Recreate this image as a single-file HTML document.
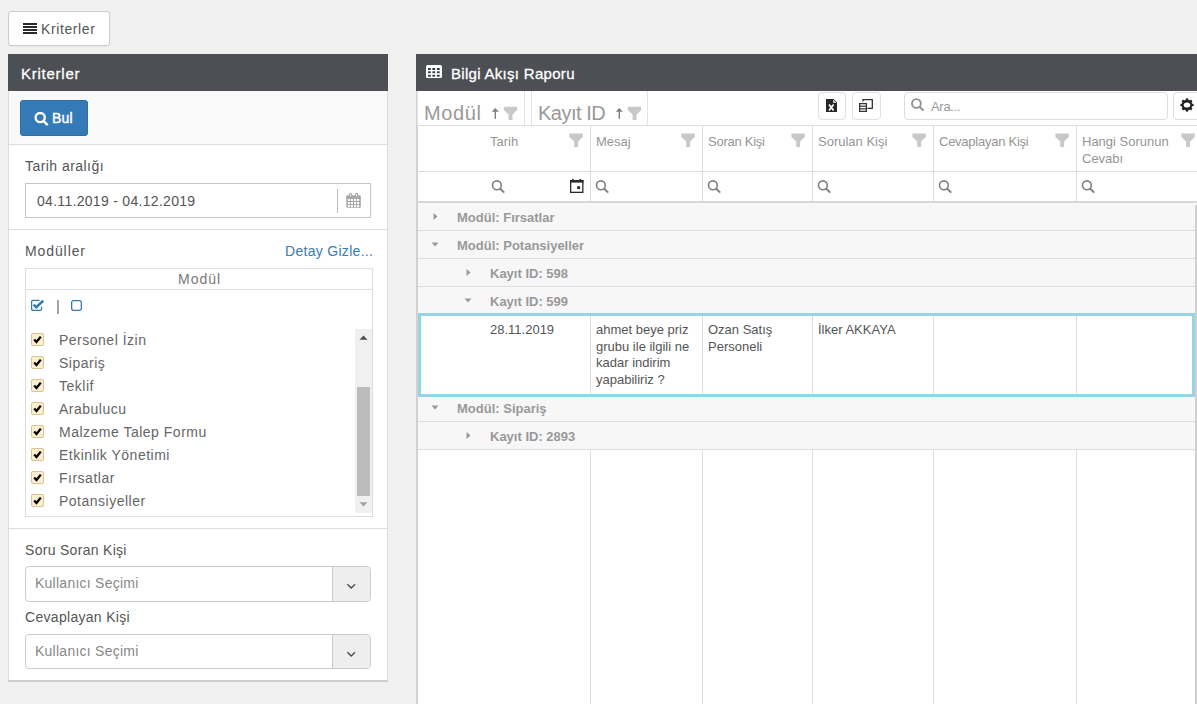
<!DOCTYPE html>
<html><head><meta charset="utf-8">
<style>
*{box-sizing:border-box;margin:0;padding:0}
html,body{width:1197px;height:704px;overflow:hidden}
body{background:#f0f0f0;font-family:"Liberation Sans",sans-serif;position:relative;color:#555}
.a{position:absolute}
.t{position:absolute;white-space:nowrap;line-height:1}
.lbl{font-size:14px;color:#555;letter-spacing:0.3px}
.cb{position:absolute;left:31px;width:13px;height:13px;background:#fcefd0;border:1px solid #d8c393;border-radius:2px}
.cbt{position:absolute;left:59px;font-size:14px;color:#666;white-space:nowrap;line-height:1;letter-spacing:0.5px}
.vl{position:absolute;width:1px;background:#dddddd}
.hl{position:absolute;height:1px;background:#dddddd}
.hd{position:absolute;font-size:13px;color:#959595;white-space:nowrap;line-height:1}
.gr{position:absolute;left:418px;width:779px;background:#f7f7f7;border-bottom:1px solid #dddddd}
.gt{position:absolute;font-size:13px;font-weight:bold;color:#999;white-space:nowrap;line-height:1}
.dt{position:absolute;font-size:13px;color:#555;white-space:nowrap;line-height:16.7px}
</style></head><body>

<!-- top button -->
<div class="a" style="left:8px;top:11px;width:102px;height:35px;background:#fff;border:1px solid #ccc;border-radius:3px;box-shadow:0 1px 0 rgba(0,0,0,.04)"></div>
<svg class="a" style="left:23px;top:23px" width="14" height="11" viewBox="0 0 14 11"><rect x="0" y="0" width="14" height="2" fill="#2a2a2a"/><rect x="0" y="3" width="14" height="2" fill="#2a2a2a"/><rect x="0" y="6" width="14" height="2" fill="#2a2a2a"/><rect x="0" y="9" width="14" height="2" fill="#2a2a2a"/></svg>
<div class="t" style="left:41px;top:22px;font-size:14px;color:#555;letter-spacing:0.6px">Kriterler</div>

<!-- ============ left panel ============ -->
<div class="a" style="left:8px;top:54px;width:380px;height:628px;background:#fff;border:1px solid #ddd;border-top:0;border-bottom:2px solid #ccc"></div>
<div class="a" style="left:8px;top:54px;width:380px;height:37px;background:#4c4f54"></div>
<div class="t" style="left:21px;top:66px;font-size:15px;color:#fff;letter-spacing:0.75px;-webkit-text-stroke:0.3px #fff">Kriterler</div>

<!-- toolbar -->
<div class="a" style="left:9px;top:91px;width:378px;height:54px;background:#f9f9f9;border-bottom:1px solid #dddddd"></div>
<div class="a" style="left:20px;top:100px;width:68px;height:36px;background:#337ab7;border:1px solid #2e6da4;border-radius:3px"></div>
<svg class="a" style="left:34px;top:112px" width="15" height="14" viewBox="0 0 15 14"><circle cx="6.2" cy="5.6" r="4.6" fill="none" stroke="#fff" stroke-width="2.3"/><line x1="9.4" y1="8.9" x2="13" y2="12.4" stroke="#fff" stroke-width="2.5" stroke-linecap="round"/></svg>
<div class="t" style="left:52px;top:111px;font-size:14px;color:#fff;-webkit-text-stroke:0.45px #fff;letter-spacing:0.2px">Bul</div>

<!-- tarih -->
<div class="t lbl" style="left:25px;top:159px;letter-spacing:0.45px">Tarih aralığı</div>
<div class="a" style="left:25px;top:183px;width:346px;height:35px;border:1px solid #c6c6c6;background:#fff"></div>
<div class="t" style="left:37px;top:194px;font-size:14px;color:#555;letter-spacing:0.3px">04.11.2019 - 04.12.2019</div>
<div class="a" style="left:337px;top:189px;width:1px;height:24px;background:#bbb"></div>
<svg class="a" style="left:346px;top:193px" width="15" height="15" viewBox="0 0 15 15"><rect x="0.3" y="2.2" width="14.5" height="12.6" rx="1.3" fill="#a6a6a6"/><rect x="3" y="0.1" width="2.9" height="4" rx="1" fill="#a6a6a6"/><rect x="9.1" y="0.1" width="2.9" height="4" rx="1" fill="#a6a6a6"/><g fill="#fff"><rect x="4" y="1.3" width="0.9" height="2.2"/><rect x="10.1" y="1.3" width="0.9" height="2.2"/><rect x="1.8" y="5.9" width="2.1" height="2.05"/><rect x="4.9" y="5.9" width="2.1" height="2.05"/><rect x="8.0" y="5.9" width="2.1" height="2.05"/><rect x="11.0" y="5.9" width="2.1" height="2.05"/><rect x="1.8" y="9.0" width="2.1" height="2.05"/><rect x="4.9" y="9.0" width="2.1" height="2.05"/><rect x="8.0" y="9.0" width="2.1" height="2.05"/><rect x="11.0" y="9.0" width="2.1" height="2.05"/><rect x="1.8" y="12.0" width="2.1" height="2.05"/><rect x="4.9" y="12.0" width="2.1" height="2.05"/><rect x="8.0" y="12.0" width="2.1" height="2.05"/><rect x="11.0" y="12.0" width="2.1" height="2.05"/></g></svg>
<div class="hl" style="left:9px;top:229px;width:378px"></div>

<!-- moduller -->
<div class="t lbl" style="left:25px;top:244px;letter-spacing:0.9px">Modüller</div>
<div class="t" style="left:285px;top:244px;font-size:14px;color:#3a7cb9;letter-spacing:0.3px">Detay Gizle...</div>
<div class="a" style="left:25px;top:268px;width:348px;height:249px;border:1px solid #dddddd;background:#fff"></div>
<div class="hl" style="left:26px;top:289px;width:346px"></div>
<div class="t" style="left:178px;top:272px;font-size:14px;color:#777;letter-spacing:1px">Modül</div>
<svg class="a" style="left:31px;top:299px" width="14" height="13" viewBox="0 0 14 13"><path d="M10.6 7.5 V10 Q10.6 11.4 9.2 11.4 H2 Q0.6 11.4 0.6 10 V2.8 Q0.6 1.4 2 1.4 H8.5" fill="none" stroke="#337ab7" stroke-width="1.25"/><path d="M2.6 5.6 L5.3 8.3 L12.3 1.6" fill="none" stroke="#337ab7" stroke-width="2.6" stroke-linejoin="miter"/></svg>
<div class="a" style="left:57px;top:300px;width:2px;height:14px;background:#a3a3a3"></div>
<svg class="a" style="left:71px;top:300px" width="11" height="11" viewBox="0 0 11 11"><rect x="0.65" y="0.65" width="9.7" height="9.7" rx="1.8" fill="none" stroke="#337ab7" stroke-width="1.3"/></svg>

<div class="cb" style="top:333px"></div><div class="cbt" style="top:333px">Personel İzin</div>
<div class="cb" style="top:356px"></div><div class="cbt" style="top:356px">Sipariş</div>
<div class="cb" style="top:379px"></div><div class="cbt" style="top:379px">Teklif</div>
<div class="cb" style="top:402px"></div><div class="cbt" style="top:402px">Arabulucu</div>
<div class="cb" style="top:425px"></div><div class="cbt" style="top:425px">Malzeme Talep Formu</div>
<div class="cb" style="top:448px"></div><div class="cbt" style="top:448px">Etkinlik Yönetimi</div>
<div class="cb" style="top:471px"></div><div class="cbt" style="top:471px">Fırsatlar</div>
<div class="cb" style="top:494px"></div><div class="cbt" style="top:494px">Potansiyeller</div>
<svg class="a" style="left:31px;top:333px" width="13" height="184" viewBox="0 0 13 184">
<g fill="none" stroke="#000" stroke-width="2.3"><path d="M3.2 6.5 L5.5 9 L9.8 3.6"/><path d="M3.2 29.5 L5.5 32 L9.8 26.6"/><path d="M3.2 52.5 L5.5 55 L9.8 49.6"/><path d="M3.2 75.5 L5.5 78 L9.8 72.6"/><path d="M3.2 98.5 L5.5 101 L9.8 95.6"/><path d="M3.2 121.5 L5.5 124 L9.8 118.6"/><path d="M3.2 144.5 L5.5 147 L9.8 141.6"/><path d="M3.2 167.5 L5.5 170 L9.8 164.6"/></g></svg>
<!-- scrollbar -->
<div class="a" style="left:355px;top:329px;width:17px;height:184px;background:#f0f0f0"></div>
<div class="a" style="left:357px;top:387px;width:13px;height:109px;background:#bcbcbc"></div>
<svg class="a" style="left:359px;top:335px" width="9" height="5" viewBox="0 0 9 5"><path d="M0.5 4.8 L4.5 0.5 L8.5 4.8Z" fill="#505050"/></svg>
<svg class="a" style="left:359px;top:502px" width="9" height="5" viewBox="0 0 9 5"><path d="M0.5 0.2 L4.5 4.5 L8.5 0.2Z" fill="#a3a3a3"/></svg>
<div class="hl" style="left:9px;top:528px;width:378px"></div>

<!-- kisi selects -->
<div class="t lbl" style="left:25px;top:543px">Soru Soran Kişi</div>
<div class="a" style="left:25px;top:566px;width:346px;height:36px;border:1px solid #cccccc;border-radius:4px;background:#fff;overflow:hidden"><div class="a" style="left:306px;top:0;width:39px;height:34px;background:#eeeeee;border-left:1px solid #cccccc"></div></div>
<div class="t" style="left:35px;top:576px;font-size:14px;color:#888;letter-spacing:0.25px">Kullanıcı Seçimi</div>
<svg class="a" style="left:346px;top:583px" width="11" height="7" viewBox="0 0 11 7"><path d="M1.4 1.2 L5.2 5 L9.0 1.2" fill="none" stroke="#4a4a4a" stroke-width="1.3"/></svg>

<div class="t lbl" style="left:25px;top:610px">Cevaplayan Kişi</div>
<div class="a" style="left:25px;top:634px;width:346px;height:35px;border:1px solid #cccccc;border-radius:4px;background:#fff;overflow:hidden"><div class="a" style="left:306px;top:0;width:39px;height:33px;background:#eeeeee;border-left:1px solid #cccccc"></div></div>
<div class="t" style="left:35px;top:644px;font-size:14px;color:#888;letter-spacing:0.25px">Kullanıcı Seçimi</div>
<svg class="a" style="left:346px;top:651px" width="11" height="7" viewBox="0 0 11 7"><path d="M1.4 1.2 L5.2 5 L9.0 1.2" fill="none" stroke="#4a4a4a" stroke-width="1.3"/></svg>

<!-- ============ right panel ============ -->
<div class="a" style="left:416px;top:54px;width:781px;height:650px;background:#fff;border-left:2px solid #d2d2d2"></div>
<div class="a" style="left:416px;top:54px;width:781px;height:37px;background:#4c4f54"></div>
<svg class="a" style="left:426px;top:65px" width="16" height="13" viewBox="0 0 16 13"><rect x="0" y="0" width="16" height="13" rx="1.5" fill="#fff"/><g fill="#3a3d42"><rect x="2" y="3" width="2.8" height="2"/><rect x="6.4" y="3" width="2.8" height="2"/><rect x="10.9" y="3" width="2.8" height="2"/><rect x="2" y="6.3" width="2.8" height="1.9"/><rect x="6.4" y="6.3" width="2.8" height="1.9"/><rect x="10.9" y="6.3" width="2.8" height="1.9"/><rect x="2" y="9.8" width="2.8" height="1.9"/><rect x="6.4" y="9.8" width="2.8" height="1.9"/><rect x="10.9" y="9.8" width="2.8" height="1.9"/></g></svg>
<div class="t" style="left:451px;top:66px;font-size:15px;color:#fff;letter-spacing:0.3px;-webkit-text-stroke:0.3px #fff">Bilgi Akışı Raporu</div>

<!-- group panel / toolbar -->
<div class="vl" style="left:417px;top:91px;height:34px;background:#e4e4e4"></div>
<div class="vl" style="left:524px;top:91px;height:34px;background:#e4e4e4"></div>
<div class="vl" style="left:531px;top:91px;height:34px;background:#e4e4e4"></div>
<div class="vl" style="left:647px;top:91px;height:34px;background:#e4e4e4"></div>
<div class="t" style="left:424px;top:103px;font-size:20px;color:#999;letter-spacing:0.6px">Modül</div>
<svg class="a" style="left:491px;top:107px" width="9" height="13" viewBox="0 0 9 13"><path d="M0.7 4.8 L4.3 1 L7.9 4.8 Z" fill="#808080"/><rect x="3.6" y="4" width="1.4" height="7.9" fill="#808080"/></svg>
<svg class="a" style="left:503px;top:106px" width="15" height="15"><use href="#flt" transform="translate(0.4 0.1)"/></svg>
<div class="t" style="left:538px;top:103px;font-size:20px;color:#999;letter-spacing:-0.5px">Kayıt ID</div>
<svg class="a" style="left:615px;top:107px" width="9" height="13" viewBox="0 0 9 13"><path d="M0.7 4.8 L4.3 1 L7.9 4.8 Z" fill="#808080"/><rect x="3.6" y="4" width="1.4" height="7.9" fill="#808080"/></svg>
<svg class="a" style="left:627px;top:106px" width="15" height="15"><use href="#flt" transform="translate(0.4 0.1)"/></svg>

<div class="a" style="left:818px;top:92px;width:28px;height:28px;border:1px solid #e0e0e0;border-radius:4px;background:#fff"></div>
<svg class="a" style="left:826px;top:99px" width="11" height="13" viewBox="0 0 11 13"><path d="M0 0 H7.5 L11 3.5 V13 H0 Z" fill="#262626"/><path d="M7.2 0.8 V3.8 H10.2" fill="#fff"/><path d="M3 5.5 L7.6 11.5 M7.6 5.5 L3 11.5" stroke="#fff" stroke-width="1.7"/></svg>
<div class="a" style="left:852px;top:92px;width:29px;height:28px;border:1px solid #e0e0e0;border-radius:4px;background:#fff"></div>
<svg class="a" style="left:859px;top:99px" width="14" height="13" viewBox="0 0 14 13"><path d="M4 2.5 V0.6 H13.3 V9.4 H8.5" fill="none" stroke="#333" stroke-width="1.3"/><rect x="0.6" y="4.6" width="6.8" height="7.8" fill="none" stroke="#333" stroke-width="1.3"/><line x1="0.6" y1="7.2" x2="7.4" y2="7.2" stroke="#333" stroke-width="1.2"/><line x1="0.6" y1="9.8" x2="7.4" y2="9.8" stroke="#333" stroke-width="1.2"/></svg>

<div class="a" style="left:904px;top:92px;width:264px;height:28px;border:1px solid #dddddd;border-radius:4px;background:#fff"></div>
<svg class="a" style="left:911px;top:98px" width="14" height="14" viewBox="0 0 14 14"><circle cx="5.4" cy="5.5" r="4.4" fill="none" stroke="#909090" stroke-width="1.8"/><line x1="8.5" y1="8.7" x2="12.6" y2="12.6" stroke="#909090" stroke-width="2"/></svg>
<div class="t" style="left:931px;top:100px;font-size:13px;color:#999;letter-spacing:-0.3px">Ara...</div>
<div class="a" style="left:1173px;top:92px;width:40px;height:28px;border:1px solid #dddddd;border-radius:4px;background:#fff"></div>
<svg class="a" style="left:1180px;top:98.3px" width="14" height="14" viewBox="-7 -7 14 14"><g fill="#222"><circle r="5.4"/><rect id="tt" x="-1.2" y="-6.6" width="2.4" height="3"/><use href="#tt" transform="rotate(45)"/><use href="#tt" transform="rotate(90)"/><use href="#tt" transform="rotate(135)"/><use href="#tt" transform="rotate(180)"/><use href="#tt" transform="rotate(225)"/><use href="#tt" transform="rotate(270)"/><use href="#tt" transform="rotate(315)"/></g><ellipse rx="3.3" ry="2.5" fill="#fff"/></svg>
<div class="hl" style="left:417px;top:125px;width:780px;background:#dddddd"></div>

<!-- headers -->
<div class="vl" style="left:590px;top:126px;height:76px"></div>
<div class="vl" style="left:702px;top:126px;height:76px"></div>
<div class="vl" style="left:812px;top:126px;height:76px"></div>
<div class="vl" style="left:933px;top:126px;height:76px"></div>
<div class="vl" style="left:1076px;top:126px;height:76px"></div>
<div class="hl" style="left:417px;top:171px;width:780px"></div>
<div class="a" style="left:417px;top:201px;width:780px;height:2px;background:#d8d8d8"></div>

<div class="hd" style="left:490px;top:135px">Tarih</div>
<div class="hd" style="left:596px;top:135px">Mesaj</div>
<div class="hd" style="left:708px;top:135px;letter-spacing:-0.25px">Soran Kişi</div>
<div class="hd" style="left:818px;top:135px">Sorulan Kişi</div>
<div class="hd" style="left:939px;top:135px;letter-spacing:-0.25px">Cevaplayan Kişi</div>
<div class="hd" style="left:1082px;top:133px;line-height:17px">Hangi Sorunun<br>Cevabı</div>
<svg width="0" height="0" style="position:absolute"><defs><path id="flt" d="M0.4 0.6 H13.8 V4 L9.1 8.4 V13.9 H5.2 V8.4 L0.4 4 Z" fill="#c8c8c8"/><g id="srch"><circle cx="5.9" cy="5.3" r="4.4" fill="none" stroke="#808080" stroke-width="1.6"/><line x1="9" y1="8.5" x2="13.2" y2="12.6" stroke="#808080" stroke-width="2"/></g></defs></svg>
<svg class="a" style="left:569px;top:133px" width="15" height="15"><use href="#flt"/></svg>
<svg class="a" style="left:681px;top:133px" width="15" height="15"><use href="#flt"/></svg>
<svg class="a" style="left:791px;top:133px" width="15" height="15"><use href="#flt"/></svg>
<svg class="a" style="left:912px;top:133px" width="15" height="15"><use href="#flt"/></svg>
<svg class="a" style="left:1055px;top:133px" width="15" height="15"><use href="#flt"/></svg>
<svg class="a" style="left:1181px;top:133px" width="15" height="15"><use href="#flt"/></svg>

<svg class="a" style="left:491px;top:180px" width="14" height="14"><use href="#srch"/></svg>
<svg class="a" style="left:569px;top:178px" width="15" height="15" viewBox="0 0 15 15"><rect x="1.65" y="2.65" width="12.2" height="11.7" fill="none" stroke="#2a2a2a" stroke-width="1.3"/><rect x="1" y="2" width="13.5" height="2.6" fill="#2a2a2a"/><rect x="3" y="1" width="1.6" height="2" fill="#2a2a2a"/><rect x="10.5" y="1" width="1.6" height="2" fill="#2a2a2a"/><rect x="8.2" y="8.2" width="2.9" height="2.9" fill="#2a2a2a"/></svg>
<svg class="a" style="left:595px;top:180px" width="14" height="14"><use href="#srch"/></svg>
<svg class="a" style="left:707px;top:180px" width="14" height="14"><use href="#srch"/></svg>
<svg class="a" style="left:817px;top:180px" width="14" height="14"><use href="#srch"/></svg>
<svg class="a" style="left:938px;top:180px" width="14" height="14"><use href="#srch"/></svg>
<svg class="a" style="left:1081px;top:180px" width="14" height="14"><use href="#srch"/></svg>

<!-- body -->
<div class="vl" style="left:590px;top:450px;height:254px"></div>
<div class="vl" style="left:702px;top:450px;height:254px"></div>
<div class="vl" style="left:812px;top:450px;height:254px"></div>
<div class="vl" style="left:933px;top:450px;height:254px"></div>
<div class="vl" style="left:1076px;top:450px;height:254px"></div>

<div class="gr" style="top:203px;height:28px"></div>
<div class="gr" style="top:231px;height:28px"></div>
<div class="gr" style="top:259px;height:28px"></div>
<div class="gr" style="top:287px;height:27px"></div>
<div class="gr" style="top:396px;height:26px"></div>
<div class="gr" style="top:422px;height:28px"></div>

<svg class="a" style="left:433px;top:213px" width="5" height="7" viewBox="0 0 5 7"><path d="M0.5 0 L4.5 3.5 L0.5 7Z" fill="#999"/></svg>
<svg class="a" style="left:431px;top:242px" width="8" height="5" viewBox="0 0 8 5"><path d="M0.5 0.5 L7.5 0.5 L4 4.5Z" fill="#999"/></svg>
<svg class="a" style="left:466px;top:269px" width="5" height="7" viewBox="0 0 5 7"><path d="M0.5 0 L4.5 3.5 L0.5 7Z" fill="#999"/></svg>
<svg class="a" style="left:464px;top:298px" width="8" height="5" viewBox="0 0 8 5"><path d="M0.5 0.5 L7.5 0.5 L4 4.5Z" fill="#999"/></svg>
<svg class="a" style="left:431px;top:405px" width="8" height="5" viewBox="0 0 8 5"><path d="M0.5 0.5 L7.5 0.5 L4 4.5Z" fill="#999"/></svg>
<svg class="a" style="left:466px;top:432px" width="5" height="7" viewBox="0 0 5 7"><path d="M0.5 0 L4.5 3.5 L0.5 7Z" fill="#999"/></svg>

<div class="gt" style="left:457px;top:211px">Modül: Fırsatlar</div>
<div class="gt" style="left:457px;top:239px">Modül: Potansiyeller</div>
<div class="gt" style="left:490px;top:267px">Kayıt ID: 598</div>
<div class="gt" style="left:490px;top:295px">Kayıt ID: 599</div>
<div class="gt" style="left:457px;top:402px">Modül: Sipariş</div>
<div class="gt" style="left:490px;top:430px">Kayıt ID: 2893</div>

<!-- data row -->
<div class="vl" style="left:590px;top:314px;height:82px"></div>
<div class="vl" style="left:702px;top:314px;height:82px"></div>
<div class="vl" style="left:812px;top:314px;height:82px"></div>
<div class="vl" style="left:933px;top:314px;height:82px"></div>
<div class="vl" style="left:1076px;top:314px;height:82px"></div>
<div class="a" style="left:418px;top:313px;width:777px;height:84px;border:3px solid #96d5e8"></div>
<div class="dt" style="left:490px;top:322px">28.11.2019</div>
<div class="dt" style="left:596px;top:322px">ahmet beye priz<br>grubu ile ilgili ne<br>kadar indirim<br>yapabiliriz ?</div>
<div class="dt" style="left:708px;top:322px">Ozan Satış<br>Personeli</div>
<div class="dt" style="left:818px;top:322px">İlker AKKAYA</div>

<div class="a" style="left:1195px;top:205px;width:2px;height:499px;background:#cfcfcf"></div>

</body></html>
